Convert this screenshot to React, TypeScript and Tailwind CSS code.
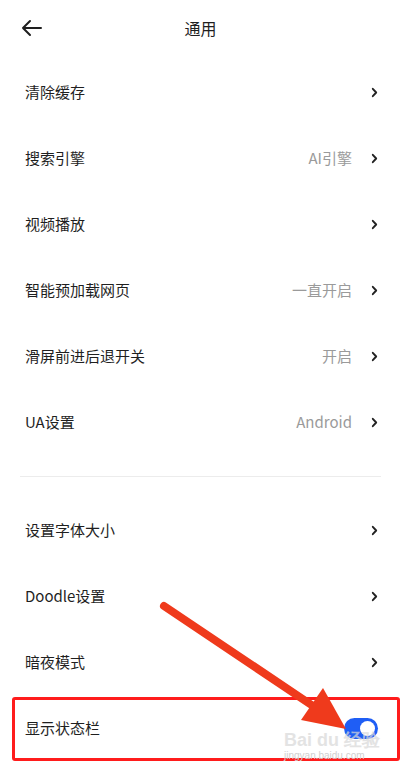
import { ReactNode } from "react";

function Chevron() {
  return (
    <svg width="7" height="11" viewBox="0 0 7 11" className="ml-[19px]">
      <path d="M1.8 1.8l3.4 3.7-3.4 3.7" fill="none" stroke="#222" strokeWidth="1.9" strokeLinecap="round" strokeLinejoin="round" />
    </svg>
  );
}

function Row({ label, value, right }: { label: string; value?: string; right?: ReactNode }) {
  return (
    <div className="flex items-center h-[66px] pl-[25px] pr-[23px]">
      <span className="flex-1 text-[15px] text-[#1f1f1f]">{label}</span>
      {value && <span className="text-[15px] text-[#9a9a9a]">{value}</span>}
      {right ?? <Chevron />}
    </div>
  );
}

export default function App() {
  return (
    <div
      className="relative w-[401px] h-[772px] bg-white overflow-hidden"
      style={{ fontFamily: '"Noto Sans CJK SC", "Noto Sans", sans-serif' }}
    >
      <div className="relative flex items-center justify-center h-[56px]">
        <svg width="22" height="18" viewBox="0 0 22 18" className="absolute left-[21px] top-[19px]">
          <path d="M20 9H2M9 2L2 9l7 7" fill="none" stroke="#1f1f1f" strokeWidth="2" strokeLinecap="round" strokeLinejoin="round" />
        </svg>
        <span className="text-[16px] text-[#1f1f1f]">通用</span>
      </div>
      <div className="mt-[3px]">
        <Row label="清除缓存" />
        <Row label="搜索引擎" value="AI引擎" />
        <Row label="视频播放" />
        <Row label="智能预加载网页" value="一直开启" />
        <Row label="滑屏前进后退开关" value="开启" />
        <Row label="UA设置" value="Android" />
      </div>
      <div className="mx-[20px] mt-[21px] mb-[20px] h-px bg-[#ececec]" />
      <div>
        <Row label="设置字体大小" />
        <Row label="Doodle设置" />
        <Row label="暗夜模式" />
        <div className="relative">
          <Row
            label="显示状态栏"
            right={
              <div className="flex items-center justify-end w-[34px] h-[21px] rounded-full bg-[#1f5ef5] pr-[3px]">
                <div className="w-[15px] h-[15px] rounded-full bg-white" />
              </div>
            }
          />
          <div className="absolute left-[12px] right-[1px] top-[2px] h-[64px] border-[3px] border-[#ff1c1c] rounded-[3px]" />
        </div>
      </div>
      <svg width="401" height="772" className="absolute inset-0 pointer-events-none">
        <line x1="164" y1="606" x2="316" y2="708" stroke="#ef3a1c" strokeWidth="8" strokeLinecap="round" />
        <polygon points="346,729 301,720 323,688" fill="#ef3a1c" />
      </svg>
      <div className="absolute left-[284px] top-[727px] text-[18px] font-bold text-[#d8d8d8] opacity-70 pointer-events-none" style={{ fontFamily: '"Liberation Sans", sans-serif' }}>
        Bai du 经验
      </div>
      <div className="absolute left-[284px] top-[748px] text-[10px] text-[#d0d0d0] pointer-events-none" style={{ fontFamily: '"Liberation Sans", sans-serif' }}>
        jingyan.baidu.com
      </div>
    </div>
  );
}
